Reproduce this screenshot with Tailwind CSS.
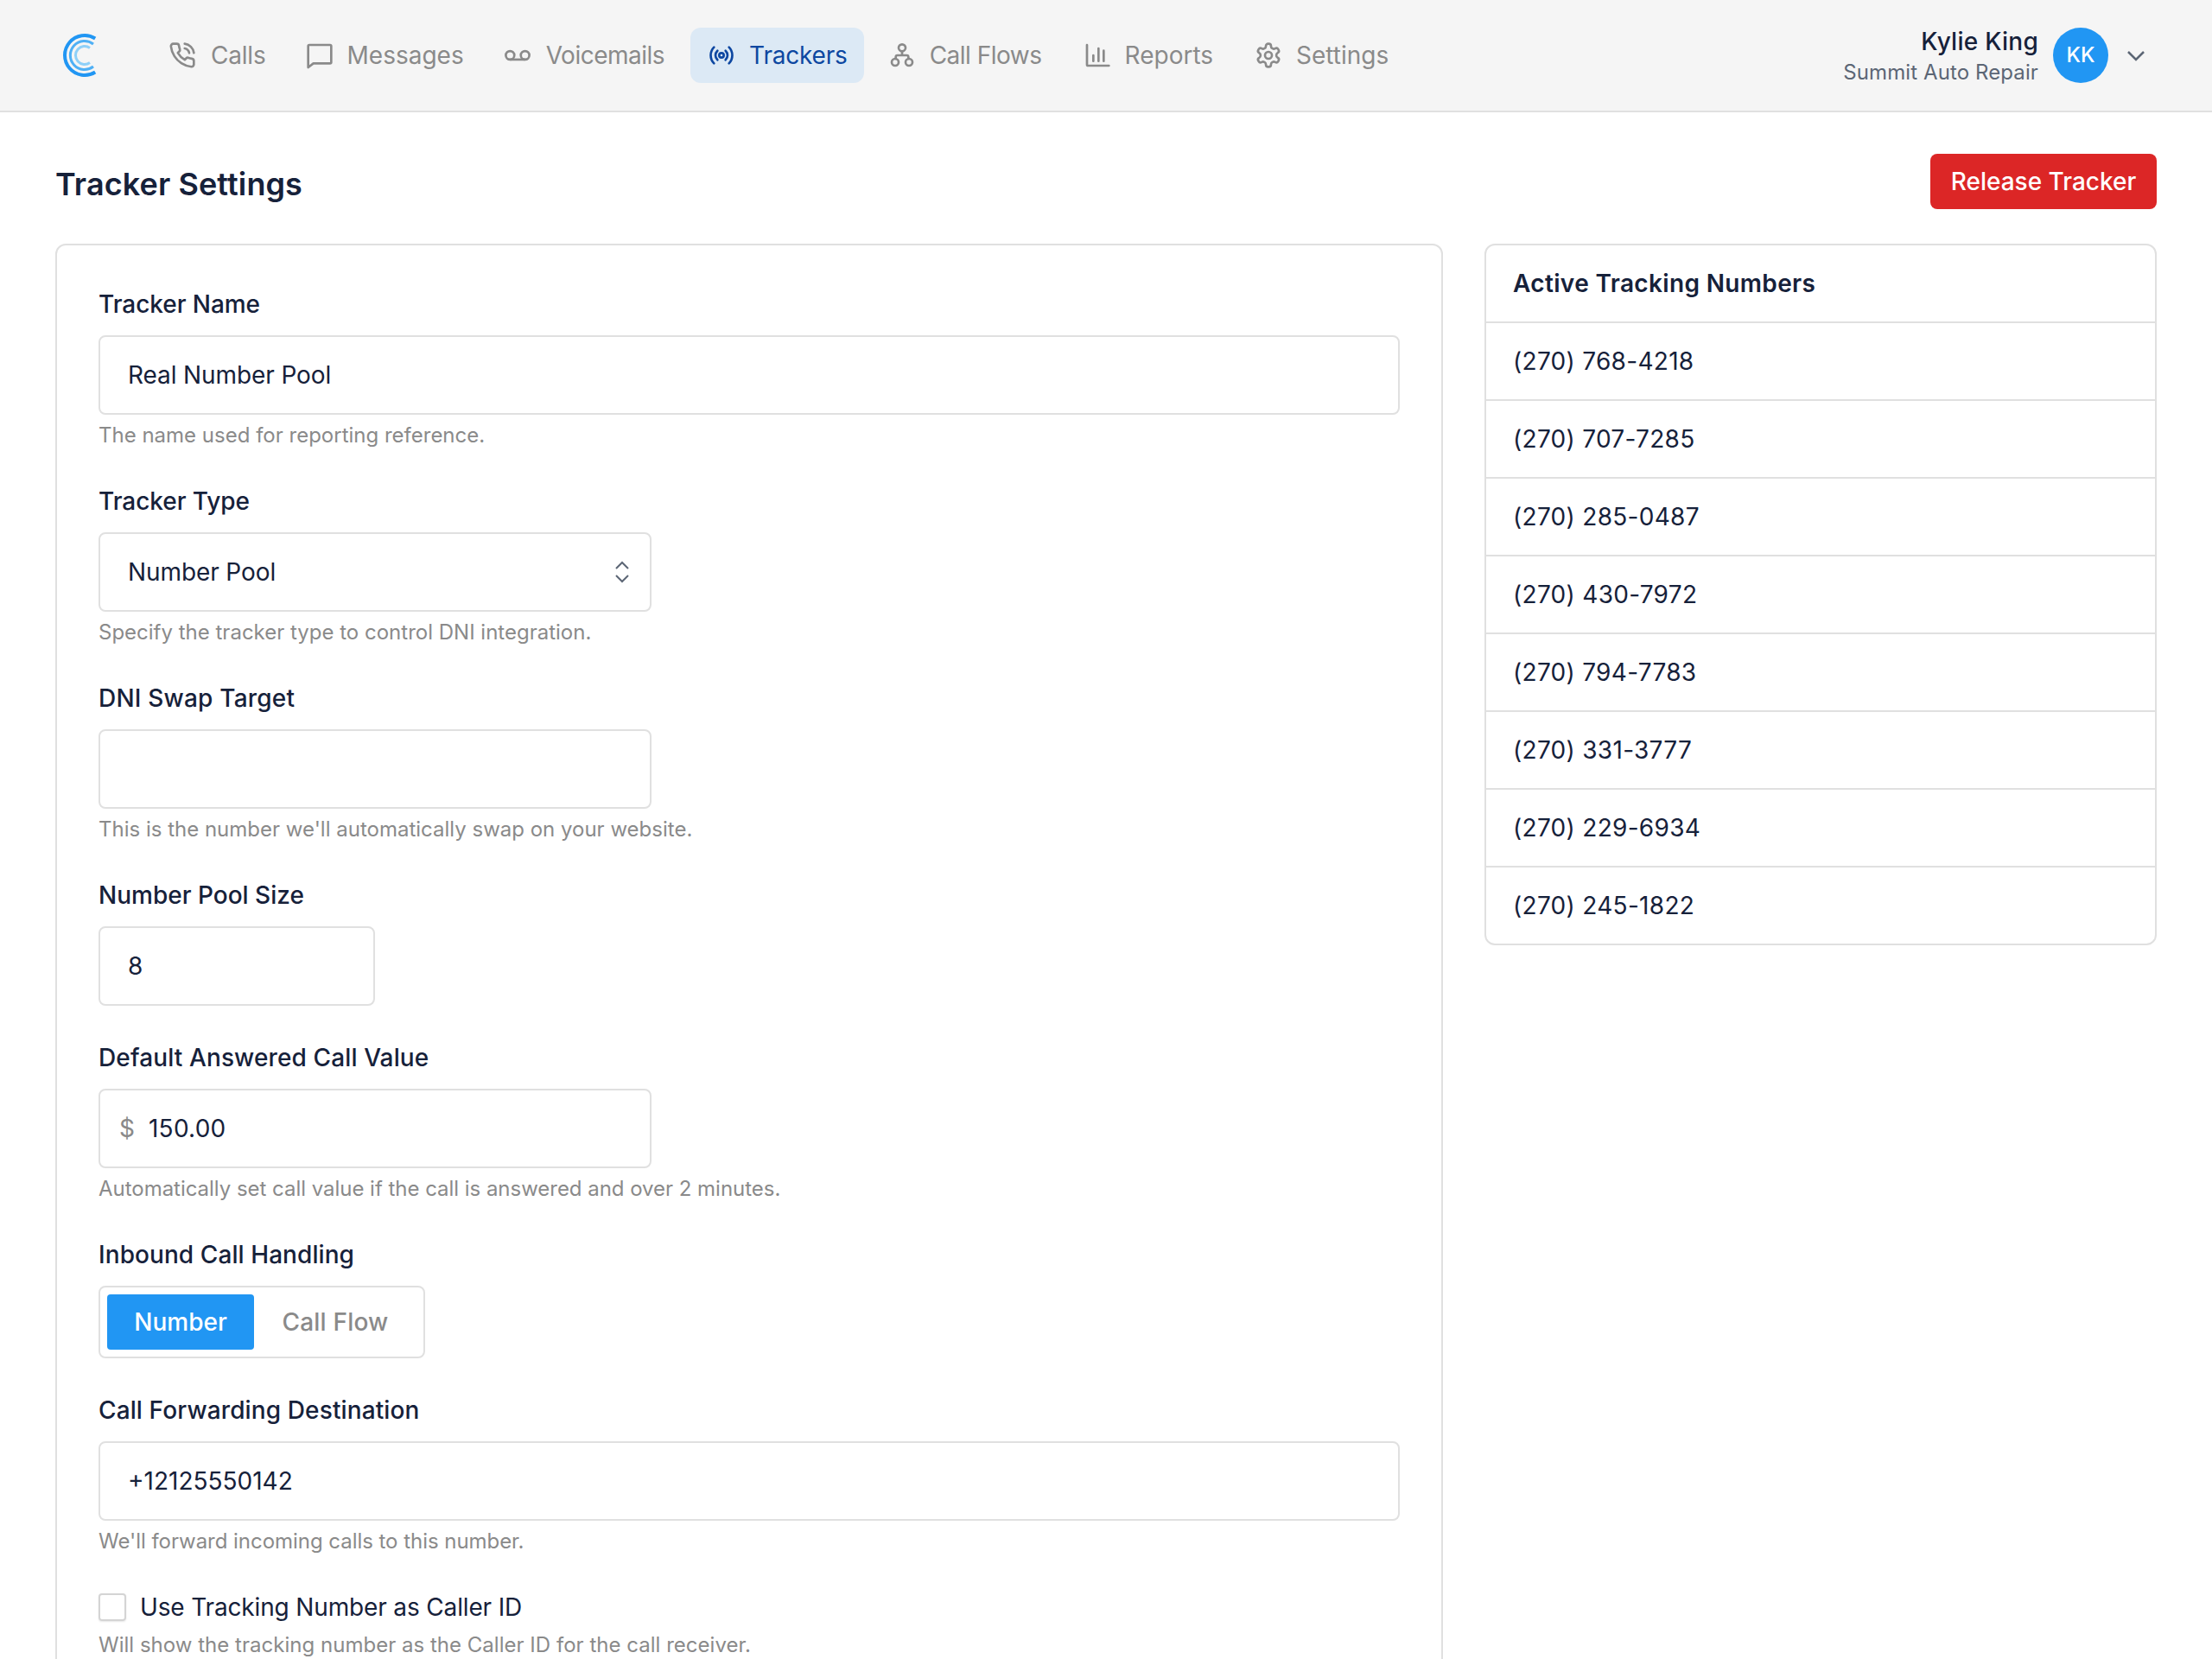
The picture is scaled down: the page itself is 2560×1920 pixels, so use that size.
<!DOCTYPE html>
<html lang="en">
<head>
  <meta charset="UTF-8" />
  <title>Tracker Settings</title>
  <script src="https://cdn.jsdelivr.net/npm/@tailwindcss/browser@4"></script>
</head>
<body class="bg-white text-[#16213a] font-['Inter',sans-serif] [font-optical-sizing:none] h-[1920px] overflow-hidden">

  <!-- Top nav -->
  <header class="h-[130px] bg-[#f5f5f5] border-b-2 border-[#e0e0e0] flex items-center pl-[73px] pr-[68px]">
    <svg class="w-[40px] h-[50px] overflow-visible" viewBox="0 0 40 50" fill="none">
      <path d="M37.200 5.500 A 23 23 0 1 0 37.200 44.500" stroke="#2196f3" stroke-width="4"/>
      <path d="M35 12 A 16.500 16.500 0 1 0 35 38" stroke="#4fb0f5" stroke-width="3"/>
      <path d="M31 16.400 A 10.500 10.500 0 1 0 31 33.600" stroke="#8fd0f8" stroke-width="3"/>
    </svg>
    <nav class="flex items-center ml-[62px] gap-[8px] text-[28px] leading-[40px] text-[#8a8a8a]">
      <a class="flex items-center gap-[17px] h-[64px] pl-[20px] pr-[18px] tracking-[-0.2px]">
        <svg class="w-[32px] h-[32px]" viewBox="0 0 24 24" fill="none" stroke="currentColor" stroke-width="2" stroke-linecap="round" stroke-linejoin="round"><path d="M14.050 2a9 9 0 0 1 8 7.940"/><path d="M14.050 6A5 5 0 0 1 18 10"/><path d="M22 16.920v3a2 2 0 0 1-2.180 2 19.790 19.790 0 0 1-8.630-3.070 19.500 19.500 0 0 1-6-6 19.790 19.790 0 0 1-3.070-8.670A2 2 0 0 1 4.110 2h3a2 2 0 0 1 2 1.720 12.840 12.840 0 0 0 .7 2.810 2 2 0 0 1-.45 2.110L8.090 9.910a16 16 0 0 0 6 6l1.270-1.270a2 2 0 0 1 2.110-.45 12.840 12.840 0 0 0 2.810.7A2 2 0 0 1 22 16.920z"/></svg>
        Calls
      </a>
      <a class="flex items-center gap-[16px] h-[64px] pl-[20px] pr-[18px]">
        <svg class="w-[32px] h-[32px]" viewBox="0 0 24 24" fill="none" stroke="currentColor" stroke-width="2" stroke-linejoin="round"><path d="M2 4a1 1 0 0 1 1-1h18a1 1 0 0 1 1 1v14a1 1 0 0 1-1 1H6.500L2 22.500z"/></svg>
        Messages
      </a>
      <a class="flex items-center gap-[17px] h-[64px] pl-[20px] pr-[22px] tracking-[-0.5px]">
        <svg class="w-[32px] h-[32px]" viewBox="0 0 24 24" fill="none" stroke="currentColor" stroke-width="2"><circle cx="5.500" cy="12" r="3.700"/><circle cx="18.500" cy="12" r="3.700"/><path d="M5.500 15.700h13"/></svg>
        Voicemails
      </a>
      <a class="flex items-center gap-[16px] h-[64px] pl-[20px] pr-[19px] tracking-[-0.2px] rounded-[12px] bg-[#dce9f5] text-[#0d47a1]">
        <svg class="w-[32px] h-[32px]" viewBox="0 0 24 24" fill="none" stroke="currentColor" stroke-width="2" stroke-linecap="round"><circle cx="12" cy="12" r="2"/><path d="M8.500 8a5.500 5.500 0 0 0 0 8M15.500 8a5.500 5.500 0 0 1 0 8M5.500 5a10 10 0 0 0 0 14M18.500 5a10 10 0 0 1 0 14"/></svg>
        Trackers
      </a>
      <a class="flex items-center gap-[16px] h-[64px] pl-[20px] pr-[20px] tracking-[-0.5px]">
        <svg class="w-[32px] h-[32px]" viewBox="0 0 24 24" fill="none" stroke="currentColor" stroke-width="2" stroke-linecap="round"><circle cx="12" cy="5.500" r="3"/><circle cx="6" cy="18" r="3"/><circle cx="18" cy="18" r="3"/><path d="M12 8.500V12M6.500 15v-1.500A1.500 1.500 0 0 1 8 12h8a1.500 1.500 0 0 1 1.500 1.500V15"/></svg>
        Call Flows
      </a>
      <a class="flex items-center gap-[16px] h-[64px] pl-[20px] pr-[20px]">
        <svg class="w-[32px] h-[32px]" viewBox="0 0 24 24" fill="none" stroke="currentColor" stroke-width="2" stroke-linecap="round"><path d="M3 3v17a1 1 0 0 0 1 1h18"/><path d="M8.500 17v-5M13 17V6M17.500 17V8"/></svg>
        Reports
      </a>
      <a class="flex items-center gap-[16px] h-[64px] pl-[20px] pr-[18px]">
        <svg class="w-[32px] h-[32px]" viewBox="0 0 24 24" fill="none" stroke="currentColor" stroke-width="2" stroke-linecap="round" stroke-linejoin="round"><path d="M12.220 2h-.44a2 2 0 0 0-2 2v.18a2 2 0 0 1-1 1.730l-.43.25a2 2 0 0 1-2 0l-.15-.08a2 2 0 0 0-2.730.73l-.22.38a2 2 0 0 0 .73 2.730l.15.1a2 2 0 0 1 1 1.720v.51a2 2 0 0 1-1 1.740l-.15.09a2 2 0 0 0-.73 2.730l.22.38a2 2 0 0 0 2.730.73l.15-.08a2 2 0 0 1 2 0l.43.25a2 2 0 0 1 1 1.730V20a2 2 0 0 0 2 2h.44a2 2 0 0 0 2-2v-.18a2 2 0 0 1 1-1.730l.43-.25a2 2 0 0 1 2 0l.15.08a2 2 0 0 0 2.730-.73l.22-.39a2 2 0 0 0-.73-2.730l-.15-.08a2 2 0 0 1-1-1.740v-.5a2 2 0 0 1 1-1.740l.15-.09a2 2 0 0 0 .73-2.730l-.22-.38a2 2 0 0 0-2.730-.73l-.15.08a2 2 0 0 1-2 0l-.43-.25a2 2 0 0 1-1-1.730V4a2 2 0 0 0-2-2z"/><circle cx="12" cy="12" r="3"/></svg>
        Settings
      </a>
    </nav>
    <div class="ml-auto flex items-center">
      <div class="text-right mr-[17px] mt-[3px]">
        <div class="text-[28px] leading-[36px] font-medium tracking-[0.25px] text-[#16213a]">Kylie King</div>
        <div class="text-[24px] leading-[36px] tracking-[0.1px] text-[#5c6675]">Summit Auto Repair</div>
      </div>
      <div class="w-[64px] h-[64px] rounded-full bg-[#2196f3] text-white text-[24px] font-medium flex items-center justify-center">KK</div>
      <svg class="w-[24px] h-[24px] ml-[20px] mr-[8px]" viewBox="0 0 24 24" fill="none" stroke="#5c6675" stroke-width="2.500"><path d="M3 8l9 9 9-9"/></svg>
    </div>
  </header>

  <main class="px-[64px]">
    <div class="flex items-start justify-between h-[152px] pt-[48px]">
      <h1 class="text-[36px] leading-[54px] font-semibold tracking-[0.1px] mt-[8px]">Tracker Settings</h1>
      <button class="h-[64px] w-[262px] rounded-[8px] bg-[#dc2626] text-white text-[28px] font-medium">Release Tracker</button>
    </div>

    <div class="flex items-start gap-[48px]">
      <!-- Settings form -->
      <section class="w-[1606px] shrink-0 border-2 border-[#e0e0e0] rounded-[12px] p-[48px] flex flex-col gap-[40px]">
        <div>
          <label class="block text-[28px] leading-[40px] font-medium tracking-[-0.05px]">Tracker Name</label>
          <div class="mt-[16px] h-[92px] border-2 border-[#e0e0e0] rounded-[8px] flex items-center px-[32px] text-[28px] tracking-[-0.1px]">Real Number Pool</div>
          <p class="mt-[8px] text-[24px] leading-[32px] text-[#8a8a8a]">The name used for reporting reference.</p>
        </div>
        <div>
          <label class="block text-[28px] leading-[40px] font-medium tracking-[-0.05px]">Tracker Type</label>
          <div class="mt-[16px] w-[640px] h-[92px] border-2 border-[#e0e0e0] rounded-[8px] flex items-center justify-between pl-[32px] pr-[22px] text-[28px] tracking-[-0.1px]">
            Number Pool
            <svg class="w-[20px] h-[28px]" viewBox="0 0 20 28" fill="none" stroke="#5c6675" stroke-width="2"><path d="M3 10l7-7 7 7M3 18l7 7 7-7"/></svg>
          </div>
          <p class="mt-[8px] text-[24px] leading-[32px] text-[#8a8a8a]">Specify the tracker type to control DNI integration.</p>
        </div>
        <div>
          <label class="block text-[28px] leading-[40px] font-medium tracking-[0.2px]">DNI Swap Target</label>
          <div class="mt-[16px] w-[640px] h-[92px] border-2 border-[#e0e0e0] rounded-[8px]"></div>
          <p class="mt-[8px] text-[24px] leading-[32px] text-[#8a8a8a]">This is the number we'll automatically swap on your website.</p>
        </div>
        <div>
          <label class="block text-[28px] leading-[40px] font-medium">Number Pool Size</label>
          <div class="mt-[16px] w-[320px] h-[92px] border-2 border-[#e0e0e0] rounded-[8px] flex items-center px-[32px] text-[28px]">8</div>
        </div>
        <div>
          <label class="block text-[28px] leading-[40px] font-medium tracking-[0.12px]">Default Answered Call Value</label>
          <div class="mt-[16px] w-[640px] h-[92px] border-2 border-[#e0e0e0] rounded-[8px] flex items-center pl-[22px] text-[28px]">
            <span class="text-[#8a8a8a] mr-[16px]">$</span><span class="tracking-[0.25px]">150.00</span>
          </div>
          <p class="mt-[8px] text-[24px] leading-[32px] tracking-[-0.03px] text-[#8a8a8a]">Automatically set call value if the call is answered and over 2 minutes.</p>
        </div>
        <div>
          <label class="block text-[28px] leading-[40px] font-medium tracking-[0.08px]">Inbound Call Handling</label>
          <div class="mt-[16px] inline-flex align-top h-[84px] p-[8px] border-2 border-[#e0e0e0] rounded-[8px] text-[28px] font-medium">
            <span class="w-[170px] rounded-[4px] bg-[#2196f3] text-white flex items-center justify-center">Number</span>
            <span class="w-[188px] text-[#8a8a8a] tracking-[0.2px] flex items-center justify-center">Call Flow</span>
          </div>
        </div>
        <div>
          <label class="block text-[28px] leading-[40px] font-medium tracking-[0.12px]">Call Forwarding Destination</label>
          <div class="mt-[16px] h-[92px] border-2 border-[#e0e0e0] rounded-[8px] flex items-center px-[32px] text-[28px]">+12125550142</div>
          <p class="mt-[8px] text-[24px] leading-[32px] tracking-[-0.04px] text-[#8a8a8a]">We'll forward incoming calls to this number.</p>
        </div>
        <div>
          <div class="flex items-center gap-[16px]">
            <span class="w-[32px] h-[32px] border-2 border-[#d4d4d4] rounded-[4px] shadow-[0_1px_2px_rgba(0,0,0,0.1)]"></span>
            <span class="text-[28px] leading-[40px] tracking-[-0.15px]">Use Tracking Number as Caller ID</span>
          </div>
          <p class="mt-[8px] text-[24px] leading-[32px] tracking-[0.02px] text-[#8a8a8a]">Will show the tracking number as the Caller ID for the call receiver.</p>
        </div>
      </section>

      <!-- Tracking numbers -->
      <aside class="flex-1 border-2 border-[#e0e0e0] rounded-[12px] text-[28px] tracking-[0.3px]">
        <h2 class="h-[88px] px-[31px] flex items-center font-semibold tracking-[0.35px]">Active Tracking Numbers</h2>
        <div class="h-[90px] px-[31px] flex items-center border-t-2 border-[#e0e0e0]">(270) 768-4218</div>
        <div class="h-[90px] px-[31px] flex items-center border-t-2 border-[#e0e0e0]">(270) 707-7285</div>
        <div class="h-[90px] px-[31px] flex items-center border-t-2 border-[#e0e0e0]">(270) 285-0487</div>
        <div class="h-[90px] px-[31px] flex items-center border-t-2 border-[#e0e0e0]">(270) 430-7972</div>
        <div class="h-[90px] px-[31px] flex items-center border-t-2 border-[#e0e0e0]">(270) 794-7783</div>
        <div class="h-[90px] px-[31px] flex items-center border-t-2 border-[#e0e0e0]">(270) 331-3777</div>
        <div class="h-[90px] px-[31px] flex items-center border-t-2 border-[#e0e0e0]">(270) 229-6934</div>
        <div class="h-[90px] px-[31px] flex items-center border-t-2 border-[#e0e0e0]">(270) 245-1822</div>
      </aside>
    </div>
  </main>

</body>
</html>
